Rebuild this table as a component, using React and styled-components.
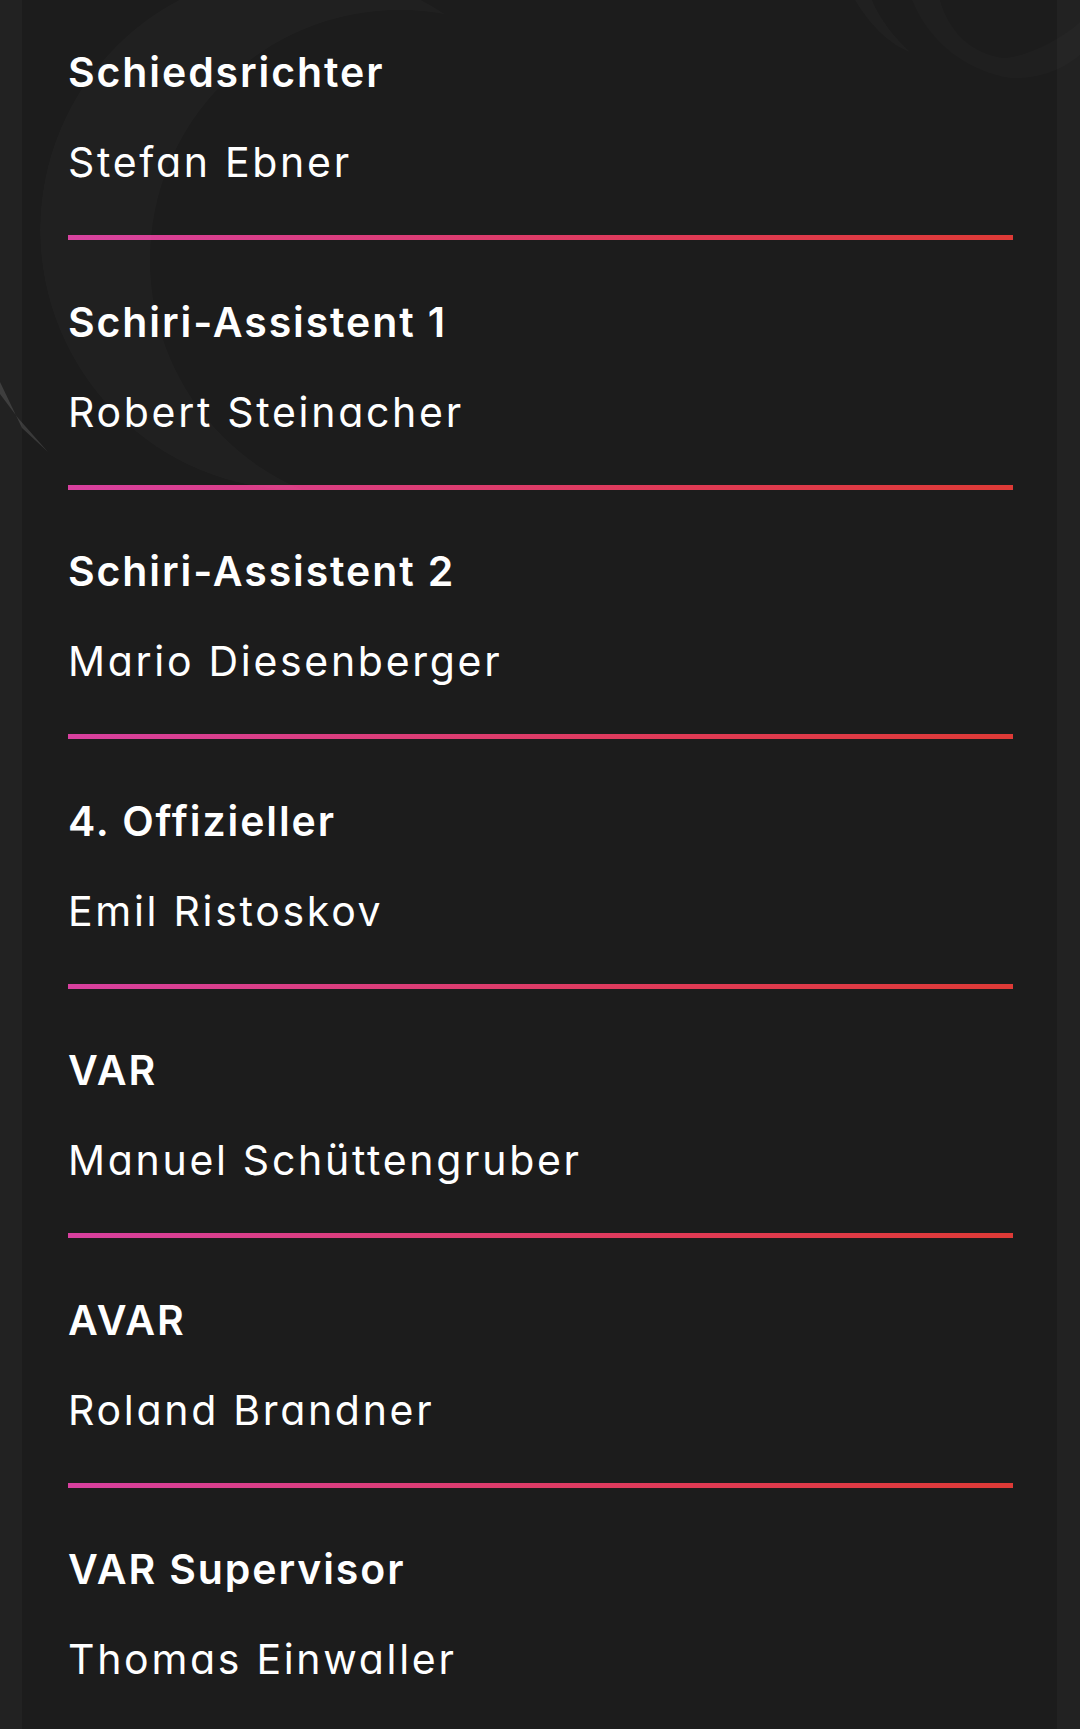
import React from 'react';
import styled, { createGlobalStyle } from 'styled-components';

const GlobalStyle = createGlobalStyle`
  html, body {
    margin: 0;
    padding: 0;
    background: #222222;
  }
  body {
    font-family: Inter, "Noto Sans", "Liberation Sans", sans-serif;
    -webkit-font-smoothing: antialiased;
  }
  * { box-sizing: border-box; }
`;

const Page = styled.div`
  position: relative;
  min-height: 1729px;
  display: flex;
  padding: 0 23px 0 22px;
  overflow: hidden;
`;

const Panel = styled.main`
  flex: 1;
  background: #1c1c1c;
  padding: 47px 44px 0 46px;
  display: flex;
  flex-direction: column;
  gap: 56.5px;
`;

const Row = styled.section`
  display: flex;
  flex-direction: column;
`;

const Role = styled.h3`
  margin: 0;
  font-size: 41px;
  line-height: 50px;
  font-weight: 600;
  color: #ffffff;
  letter-spacing: 1.9px;
  font-feature-settings: "cv11" 1;
`;

const Name = styled.p`
  margin: 40px 0 0;
  font-size: 41px;
  line-height: 50px;
  font-weight: 400;
  color: #ffffff;
  letter-spacing: 2.7px;
  font-feature-settings: "cv11" 1;
`;

const Divider = styled.hr`
  margin: 48px 0 0;
  border: 0;
  height: 5px;
  width: 100%;
  background: linear-gradient(90deg, #d8409f 0%, #dc3d78 35%, #e03a55 65%, #de3a36 100%);
`;

const Decor = styled.svg`
  position: absolute;
  top: 0;
  left: 0;
  pointer-events: none;
`;

const officials = [
  { role: 'Schiedsrichter', name: 'Stefan Ebner' },
  { role: 'Schiri-Assistent 1', name: 'Robert Steinacher' },
  { role: 'Schiri-Assistent 2', name: 'Mario Diesenberger' },
  { role: '4. Offizieller', name: 'Emil Ristoskov' },
  { role: 'VAR', name: 'Manuel Schüttengruber' },
  { role: 'AVAR', name: 'Roland Brandner' },
  { role: 'VAR Supervisor', name: 'Thomas Einwaller' },
];

function Background() {
  return (
    <Decor width="1080" height="1729" viewBox="0 0 1080 1729" aria-hidden="true">
      <defs>
        <mask id="crescent">
          <circle cx="300" cy="230" r="260" fill="#fff" />
          <circle cx="400" cy="260" r="250" fill="#000" />
        </mask>
      </defs>
      <circle cx="300" cy="230" r="260" fill="rgba(255,255,255,0.018)" mask="url(#crescent)" />
      <path
        fill="rgba(255,255,255,0.13)"
        d="M0 382 L 22 428 L 48 452 L 18 418 L 0 394 Z"
      />
      <path
        fill="rgba(255,255,255,0.02)"
        d="M855 0 C 870 25, 890 45, 910 52 C 895 38, 880 20, 872 0 Z"
      />
      <path
        fill="rgba(255,255,255,0.016)"
        d="M912 0 C 930 45, 970 72, 1010 78 C 1040 80, 1065 68, 1080 55 L 1080 22 C 1060 40, 1030 55, 1005 58 C 975 55, 950 35, 940 0 Z"
      />
    </Decor>
  );
}

export default function App() {
  return (
    <>
      <GlobalStyle />
      <Page>
        <Panel>
          {officials.map((o, i) => (
            <Row key={o.role}>
              <Role>{o.role}</Role>
              <Name>{o.name}</Name>
              {i < officials.length - 1 && <Divider />}
            </Row>
          ))}
        </Panel>
        <Background />
      </Page>
    </>
  );
}
